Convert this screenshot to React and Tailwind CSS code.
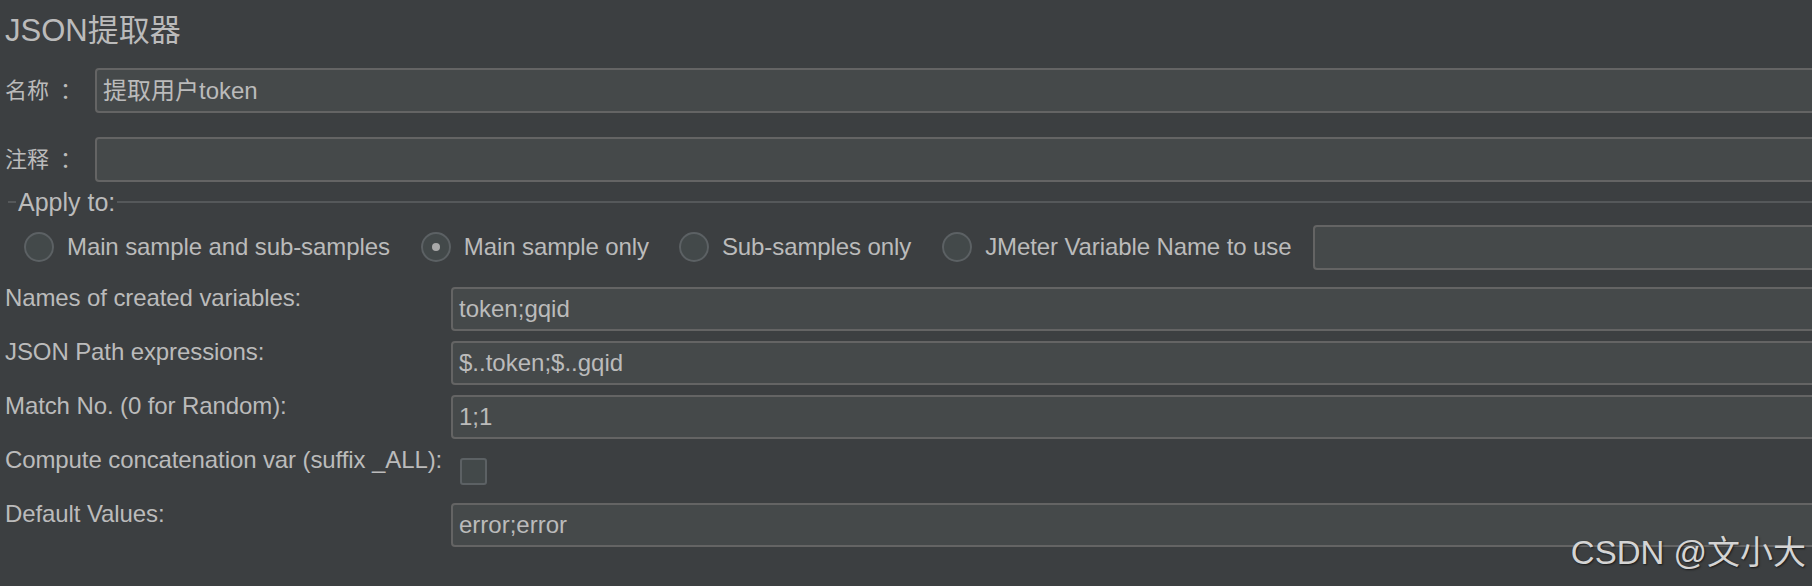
import React from "react";

const FONT = "font-['Liberation_Sans','Noto_Sans_CJK_SC',sans-serif]";

function TextBox({ value, className = "" }) {
  return (
    <div
      className={`h-[45px] flex items-center rounded-[4px] border-2 border-[#646464] bg-[#45494a] pl-[6px] -mr-[10px] text-[24px] text-[#bbbbbb] whitespace-nowrap ${className}`}
    >
      {value}
    </div>
  );
}

function Radio({ label, checked }) {
  return (
    <div className="flex items-center gap-[13px]">
      <span className="w-[30px] h-[30px] rounded-full border-2 border-[#5c6164] bg-[#43494a] flex items-center justify-center">
        {checked && <span className="w-[8px] h-[8px] rounded-full bg-[#a9a9a9]" />}
      </span>
      <span className="text-[24px] tracking-[-0.1px] whitespace-nowrap">{label}</span>
    </div>
  );
}

const rows = [
  { label: "Names of created variables:", value: "token;gqid" },
  { label: "JSON Path expressions:", value: "$..token;$..gqid" },
  { label: "Match No. (0 for Random):", value: "1;1" },
  { label: "Compute concatenation var (suffix _ALL):", checkbox: true },
  { label: "Default Values:", value: "error;error" },
];

export default function App() {
  return (
    <div
      className={`relative w-full h-[586px] overflow-hidden bg-[#3c3f41] text-[#bbbbbb] ${FONT}`}
    >
      {/* title */}
      <div className="h-[60px] flex items-center pl-[5px] text-[31px] leading-none">
        JSON提取器
      </div>

      {/* name / comment */}
      <div className="mt-[8px] flex flex-col gap-[24px]">
        <div className="flex items-center">
          <div className="w-[95px] pl-[5px] text-[22px]">
            名称<span className="ml-[11px]">：</span>
          </div>
          <TextBox value="提取用户token" className="flex-1" />
        </div>
        <div className="flex items-center">
          <div className="w-[95px] pl-[5px] text-[22px]">
            注释<span className="ml-[11px]">：</span>
          </div>
          <TextBox value="" className="flex-1" />
        </div>
      </div>

      {/* Apply to group */}
      <div className="mt-[8px] h-[24px] flex items-center">
        <span className="ml-[8px] w-[8px] h-[2px] bg-[#55585a]" />
        <span className="px-[2px] text-[25px] leading-none">Apply to:</span>
        <span className="flex-1 h-[2px] bg-[#55585a]" />
      </div>

      <div className="mt-[11px] h-[44px] flex items-center pl-[24px]">
        <Radio label="Main sample and sub-samples" />
        <div className="ml-[31px]">
          <Radio label="Main sample only" checked />
        </div>
        <div className="ml-[30px]">
          <Radio label="Sub-samples only" />
        </div>
        <div className="ml-[31px]">
          <Radio label="JMeter Variable Name to use" />
        </div>
        <TextBox value="" className="ml-[22px] flex-1" />
      </div>

      {/* extractor fields */}
      <div className="mt-[18px] flex flex-col gap-[10px]">
        {rows.map((r) => (
          <div key={r.label} className="h-[44px] flex items-start">
            <div className="w-[451px] pl-[5px] text-[24px] leading-[22px] tracking-[-0.1px] whitespace-nowrap">
              {r.label}
            </div>
            {r.checkbox ? (
              <span className="mt-[9px] ml-[9px] w-[27px] h-[27px] rounded-[3px] border-2 border-[#5c6164] bg-[#43494a]" />
            ) : (
              <TextBox value={r.value} className="flex-1 !h-[44px]" />
            )}
          </div>
        ))}
      </div>

      {/* watermark */}
      <div className="absolute right-[6px] top-[536px] text-[33px] leading-none text-[#d4d4d4] [text-shadow:1px_1px_2px_rgba(0,0,0,0.6)]">
        CSDN @文小大
      </div>
    </div>
  );
}
